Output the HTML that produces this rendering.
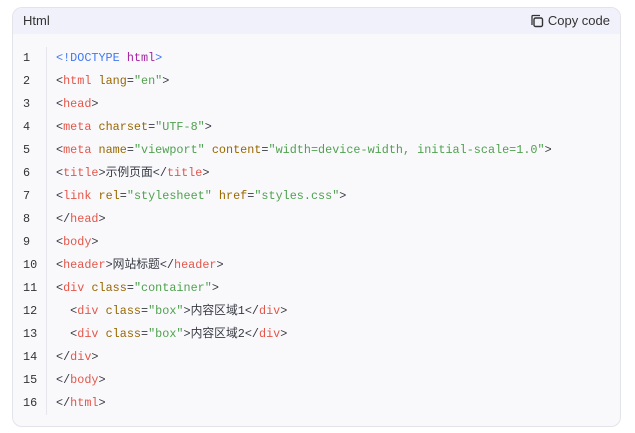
<!DOCTYPE html>
<html><head><meta charset="utf-8"><style>
body{margin:0;background:#fff;font-family:"Liberation Sans","Noto Sans CJK SC",sans-serif;}
.box{position:absolute;left:12px;top:7px;width:607px;height:418px;border:1px solid #e3e3ea;border-radius:10px;background:#f9f9fc;overflow:hidden;}
.hd{height:26px;background:#f1f1fb;font-size:13px;color:#333;position:relative;}
.hd .t{position:absolute;left:10px;top:5px;}
.hd .c{position:absolute;right:10px;top:5px;}
.hd svg{vertical-align:-3px;margin-right:4px}
.code{position:absolute;top:39px;left:0;font-family:"Liberation Mono","Noto Sans CJK SC",monospace;font-size:11.8px;color:#383a42;}
.ln{position:absolute;left:0;width:33px;border-right:1px solid #e6e6ec;}
.ln div,.src div{height:23px;line-height:23px;white-space:pre;}
.ln div{padding-left:10px;color:#333}
.src{position:absolute;left:43px;}
.t1{color:#e45649}.a{color:#986801}.s{color:#50a14f}.d{color:#4078f2}.p{color:#a626a4}
</style></head><body>
<div class="box">
<div class="hd"><span class="t">Html</span><span class="c"><svg width="14" height="14" viewBox="0 0 14 14"><path d="M2 11V2.5Q2 1.5 3 1.5H10" fill="none" stroke="#333" stroke-width="1.3"/><rect x="4" y="4" width="8.5" height="8.5" rx="1.5" fill="none" stroke="#333" stroke-width="1.4"/></svg>Copy code</span></div>
<div class="code">
<div class="ln"><div>1</div><div>2</div><div>3</div><div>4</div><div>5</div><div>6</div><div>7</div><div>8</div><div>9</div><div>10</div><div>11</div><div>12</div><div>13</div><div>14</div><div>15</div><div>16</div></div>
<div class="src">
<div><span class="d">&lt;!DOCTYPE</span> <span class="p">html</span><span class="d">&gt;</span></div>
<div>&lt;<span class="t1">html</span> <span class="a">lang</span>=<span class="s">"en"</span>&gt;</div>
<div>&lt;<span class="t1">head</span>&gt;</div>
<div>&lt;<span class="t1">meta</span> <span class="a">charset</span>=<span class="s">"UTF-8"</span>&gt;</div>
<div>&lt;<span class="t1">meta</span> <span class="a">name</span>=<span class="s">"viewport"</span> <span class="a">content</span>=<span class="s">"width=device-width, initial-scale=1.0"</span>&gt;</div>
<div>&lt;<span class="t1">title</span>&gt;示例页面&lt;/<span class="t1">title</span>&gt;</div>
<div>&lt;<span class="t1">link</span> <span class="a">rel</span>=<span class="s">"stylesheet"</span> <span class="a">href</span>=<span class="s">"styles.css"</span>&gt;</div>
<div>&lt;/<span class="t1">head</span>&gt;</div>
<div>&lt;<span class="t1">body</span>&gt;</div>
<div>&lt;<span class="t1">header</span>&gt;网站标题&lt;/<span class="t1">header</span>&gt;</div>
<div>&lt;<span class="t1">div</span> <span class="a">class</span>=<span class="s">"container"</span>&gt;</div>
<div>  &lt;<span class="t1">div</span> <span class="a">class</span>=<span class="s">"box"</span>&gt;内容区域1&lt;/<span class="t1">div</span>&gt;</div>
<div>  &lt;<span class="t1">div</span> <span class="a">class</span>=<span class="s">"box"</span>&gt;内容区域2&lt;/<span class="t1">div</span>&gt;</div>
<div>&lt;/<span class="t1">div</span>&gt;</div>
<div>&lt;/<span class="t1">body</span>&gt;</div>
<div>&lt;/<span class="t1">html</span>&gt;</div>
</div></div></div>
</body></html>
